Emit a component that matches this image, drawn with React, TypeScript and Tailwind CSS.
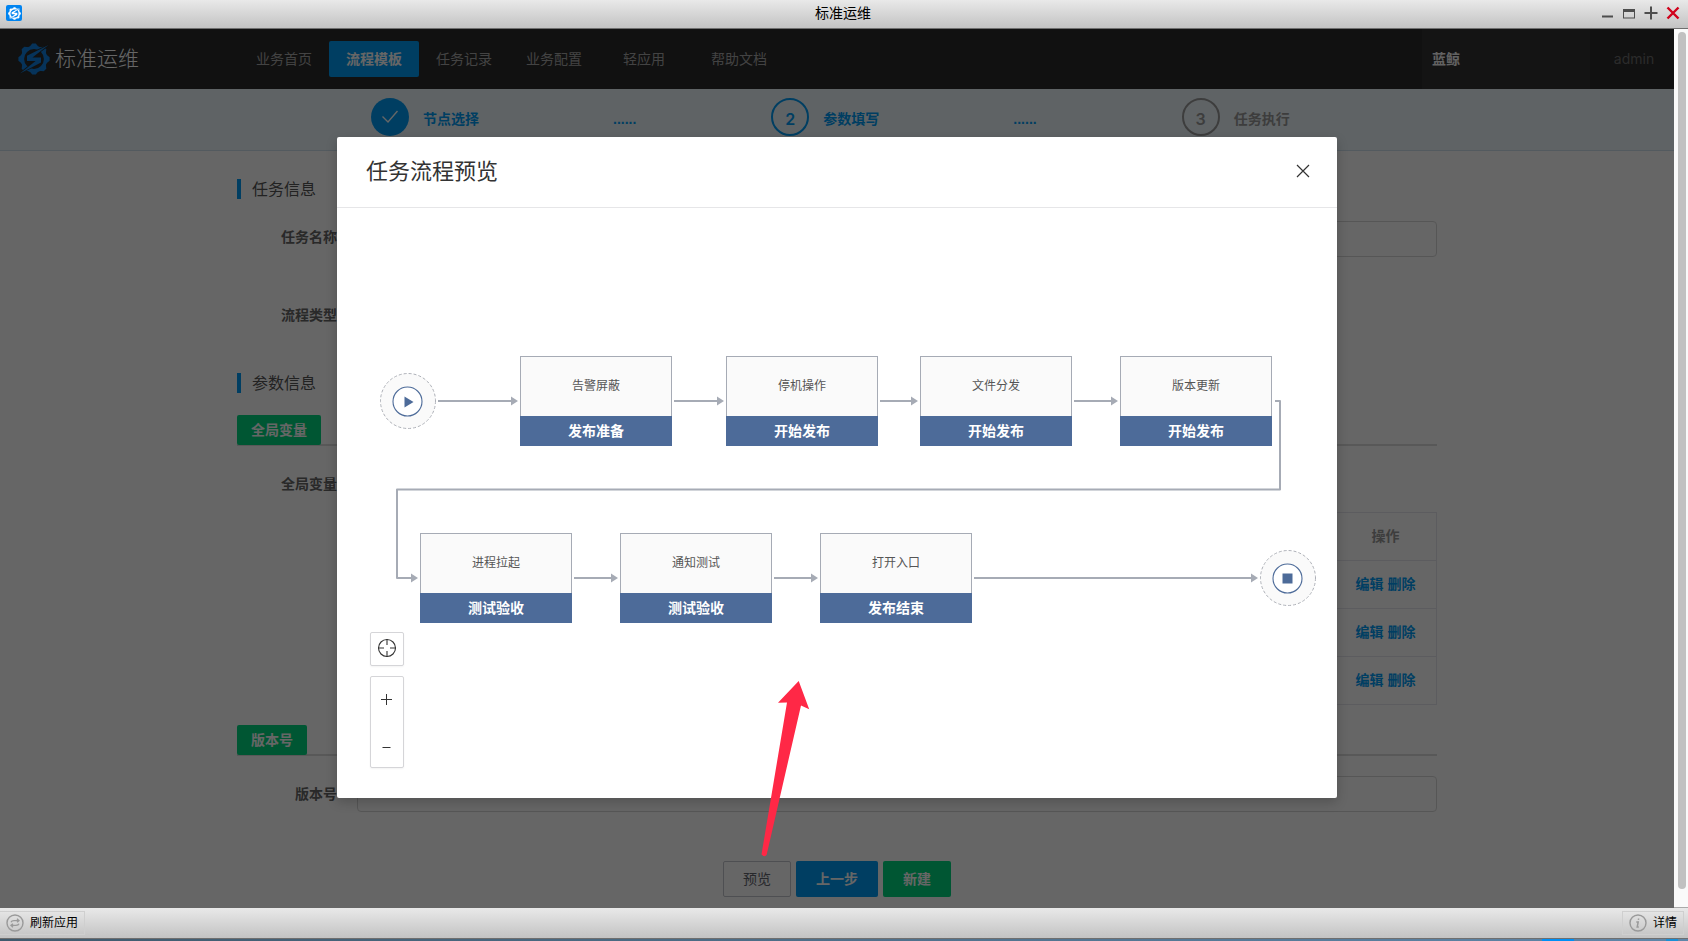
import React from "react";

const NAV = ["业务首页", "流程模板", "任务记录", "业务配置", "轻应用"];

type FlowNode = { x: number; y: number; name: string; stage: string };

const NODES: FlowNode[] = [
  { x: 183, y: 148, name: "告警屏蔽", stage: "发布准备" },
  { x: 389, y: 148, name: "停机操作", stage: "开始发布" },
  { x: 583, y: 148, name: "文件分发", stage: "开始发布" },
  { x: 783, y: 148, name: "版本更新", stage: "开始发布" },
  { x: 83, y: 325, name: "进程拉起", stage: "测试验收" },
  { x: 283, y: 325, name: "通知测试", stage: "测试验收" },
  { x: 483, y: 325, name: "打开入口", stage: "发布结束" },
];

const LINKS = [
  "M101 193H175",
  "M337 193H381",
  "M543 193H575",
  "M737 193H775",
  "M938 193H943V281.5H60V370H75",
  "M237 370H275",
  "M437 370H475",
  "M637 370H915",
];

const HEADS: [number, number][] = [
  [181, 193],
  [387, 193],
  [581, 193],
  [781, 193],
  [81, 370],
  [281, 370],
  [481, 370],
  [921, 370],
];

function Gear({ className, cut }: { className: string; cut: string }) {
  const teeth = [0, 45, 90, 135, 180, 225, 270, 315];
  return (
    <svg viewBox="0 0 32 32" className={className} aria-hidden="true">
      <circle cx="16" cy="16" r="11.6" fill="none" stroke="currentColor" strokeWidth="3.4" />
      {teeth.map((a) => (
        <path key={a} d="M11 4.4L14.2 0.4H17.8L21 4.4Z" fill="currentColor" transform={`rotate(${a} 16 16)`} />
      ))}
      <path
        d="M30.5 2L9 12.8V18H17.6L2 30.400L23 19.600V14.400H14.400Z"
        fill="currentColor"
        stroke={cut}
        strokeWidth="1.6"
        paintOrder="stroke"
      />
    </svg>
  );
}

function TitleBar() {
  return (
    <header className="flex h-[29px] shrink-0 items-center border-b border-[#6f6f6f] bg-linear-to-b from-[#e9e9e9] to-[#c3c3c3] pr-2 pb-0.5 pl-1.5">
      <div className="flex flex-1">
        <span className="flex size-4 items-center justify-center rounded-xs bg-[#0084f0] text-white">
          <Gear className="size-[13px]" cut="#0084f0" />
        </span>
      </div>
      <h1 className="text-sm leading-5 text-black">标准运维</h1>
      <div className="flex flex-1 items-center justify-end gap-2 text-[#4d4d4d]">
        <button aria-label="最小化" className="size-3.5">
          <svg viewBox="0 0 14 14" className="size-3.5"><path d="M2 10.5h11" stroke="currentColor" strokeWidth="2" /></svg>
        </button>
        <button aria-label="还原" className="size-3.5">
          <svg viewBox="0 0 14 14" className="size-3.5"><path d="M1 3h12v9.500H1zM2 6v5.500h10V6z" fill="currentColor" fillRule="evenodd" /></svg>
        </button>
        <button aria-label="最大化" className="size-3.5">
          <svg viewBox="0 0 14 14" className="size-3.5"><path d="M0.500 7h13M7 0.500v13" stroke="currentColor" strokeWidth="2" /></svg>
        </button>
        <button aria-label="关闭" className="size-3.5 text-[#d0021b]">
          <svg viewBox="0 0 14 14" className="size-3.5"><path d="M1.500 1.500l11 11M12.500 1.500l-11 11" stroke="currentColor" strokeWidth="2.4" /></svg>
        </button>
      </div>
    </header>
  );
}

function NavBar() {
  return (
    <div className="flex h-15 items-center bg-[#2b2b2b] text-sm text-[#a8a8a8]">
      <div className="flex w-[239px] items-center gap-[5px] pl-[18px] text-[21px] font-light text-white">
        <Gear className="size-8 text-[#1080e0]" cut="#2b2b2b" />
        标准运维
      </div>
      <nav className="flex flex-1">
        {NAV.map((n, i) => (
          <a
            key={n}
            href="#"
            className={
              i === 1
                ? "flex h-9 w-[90px] items-center justify-center rounded-xs bg-[#009cf5] font-bold text-white"
                : "flex h-9 w-[90px] items-center justify-center"
            }
          >
            {n}
          </a>
        ))}
        <a href="#" className="flex h-9 w-[100px] items-center justify-center">帮助文档</a>
      </nav>
      <div className="flex h-full w-[168px] items-center bg-[#343434] pl-2.5 font-bold text-[#f5f5f5]">蓝鲸</div>
      <div className="w-[84px] pl-1 text-center font-['Inter',sans-serif] text-[#6d6d6d]">admin</div>
    </div>
  );
}

const STEP_NUMBER = "flex size-[38px] items-center justify-center rounded-full border-2 pt-1 font-['Inter',sans-serif] text-base font-semibold";

function Steps() {
  return (
    <div className="h-[62px] border-b border-[#cfe2ee] bg-[#edf7fc] text-sm font-bold text-[#009cf5]">
      <ol className="mx-auto flex max-w-[1200px] items-center pt-[9px] pl-[134px]">
        <li className="flex items-center">
          <span className="flex size-[38px] items-center justify-center rounded-full bg-[#009cf5] text-white">
            <svg viewBox="0 0 16 14" className="h-3.5 w-4"><path d="M0.500 6.500L6 12L15.500 1" fill="none" stroke="currentColor" strokeWidth="1.400" /></svg>
          </span>
          <span className="ml-3.5 pt-1">节点选择</span>
          <span className="ml-[134px] pt-1">......</span>
        </li>
        <li className="ml-[135px] flex items-center">
          <span className={`${STEP_NUMBER} border-[#009cf5]`}>2</span>
          <span className="ml-3.5 pt-1">参数填写</span>
          <span className="ml-[134px] pt-1">......</span>
        </li>
        <li className="ml-[145px] flex items-center text-[#999]">
          <span className={`${STEP_NUMBER} border-[#999]`}>3</span>
          <span className="ml-3.5 pt-1">任务执行</span>
        </li>
      </ol>
    </div>
  );
}

function SectionTitle({ children }: { children: React.ReactNode }) {
  return <h2 className="h-5 border-l-4 border-[#009cf5] pl-[11px] text-base leading-[22px] text-[#555]">{children}</h2>;
}

function GroupTab({ children }: { children: React.ReactNode }) {
  return (
    <div className="flex h-[31px] items-start border-b-2 border-[#dcdcdc]">
      <h3 className="h-[30px] rounded-xs bg-[#00d880] px-3.5 text-sm leading-[30px] font-bold text-white">{children}</h3>
    </div>
  );
}

const INPUT = "h-9 w-full rounded-sm border border-[#d8d8d8] bg-white px-2.5 text-sm";

function TaskForm() {
  return (
    <form className="mx-auto max-w-[1200px] pt-7 pb-[11px] text-sm text-[#666]">
      <SectionTitle>任务信息</SectionTitle>
      <div className="mt-[22px] flex gap-5">
        <label htmlFor="task-name" className="w-[100px] shrink-0 text-right leading-8 font-bold">任务名称</label>
        <input id="task-name" className={INPUT} />
      </div>
      <div className="mt-[42px] flex">
        <span className="w-[100px] shrink-0 text-right leading-8 font-bold">流程类型</span>
      </div>
      <div className="mt-[42px]">
        <SectionTitle>参数信息</SectionTitle>
      </div>
      <div className="mt-[22px]">
        <GroupTab>全局变量</GroupTab>
      </div>
      <div className="mt-5 flex gap-5">
        <span className="w-[100px] shrink-0 text-right leading-9 font-bold">全局变量</span>
        <div className="flex-1 pt-[46px]">
          <table className="w-full border-collapse">
            <thead>
              <tr>
                <td className="border border-[#e6e7ee]" />
                <th scope="col" className="h-12 w-[102px] border border-[#e6e7ee] p-0 pb-0.5 text-center font-bold text-[#999]">操作</th>
              </tr>
            </thead>
            <tbody>
              {[1, 2, 3].map((r) => (
                <tr key={r}>
                  <td className="border border-[#e6e7ee]" />
                  <td className="h-12 border border-[#e6e7ee] p-0 pb-0.5 text-center font-bold text-[#009cf5]">
                    <a href="#">编辑</a> <a href="#">删除</a>
                  </td>
                </tr>
              ))}
            </tbody>
          </table>
        </div>
      </div>
      <div className="mt-5">
        <GroupTab>版本号</GroupTab>
      </div>
      <div className="mt-5 flex gap-5">
        <label htmlFor="version" className="w-[100px] shrink-0 text-right leading-9 font-bold">版本号</label>
        <input id="version" className={INPUT} />
      </div>
      <div className="mt-[49px] flex justify-center gap-[5px] font-bold text-white">
        <button type="button" className="h-9 w-[68px] rounded-xs border border-[#c4c6cc] bg-white font-normal text-[#63656e]">预览</button>
        <button type="button" className="h-9 w-[82px] rounded-xs bg-[#009cf5]">上一步</button>
        <button type="button" className="h-9 w-[68px] rounded-xs bg-[#00d880]">新建</button>
      </div>
    </form>
  );
}

function Terminal({ stop }: { stop?: boolean }) {
  return (
    <svg viewBox="0 0 56 56" className="size-14">
      <circle cx="28" cy="28" r="27.500" fill="#fafafa" stroke="#aeb1b8" strokeDasharray="3 2" />
      <circle cx="27.500" cy="28.500" r="14.500" fill="#fff" stroke="#4d6b99" strokeWidth="1.100" />
      {stop ? <path d="M22.500 23.500h10v10h-10z" fill="#4d6b99" /> : <path d="M24.500 23.500v11l9-5.500z" fill="#4d6b99" />}
    </svg>
  );
}

function FlowCanvas() {
  return (
    <div className="relative h-[590px]">
      <svg className="absolute inset-0 size-full" fill="none" aria-hidden="true">
        {LINKS.map((d) => (
          <path key={d} d={d} stroke="#a6abb5" strokeWidth="2" strokeLinejoin="round" />
        ))}
        {HEADS.map(([x, y]) => (
          <path key={`${x}-${y}`} d={`M${x} ${y}l-7 -4.500v9z`} fill="#a6abb5" />
        ))}
      </svg>
      <div className="absolute top-[165px] left-[43px]"><Terminal /></div>
      <div className="absolute top-[342px] left-[923px]"><Terminal stop /></div>
      {NODES.map((n) => (
        <div key={n.name} className="absolute w-[152px] text-center" style={{ left: n.x, top: n.y }}>
          <div className="h-15 border border-b-0 border-[#a6abb5] bg-[#fafafa] text-xs leading-[58px] text-[#555]">{n.name}</div>
          <div className="h-[30px] bg-[#4d6b99] text-sm leading-[30px] font-bold text-white">{n.stage}</div>
        </div>
      ))}
      <div className="absolute bottom-[30px] left-[33px] flex flex-col gap-2.5 text-[#333]">
        <button aria-label="居中" className="flex size-[34px] items-center justify-center rounded-xs border border-[#d5d5d8] bg-white pr-px pb-0.5 shadow-xs">
          <svg viewBox="0 0 20 20" className="size-5" fill="none" stroke="currentColor" strokeWidth="1.100">
            <circle cx="10" cy="10" r="8.500" />
            <path d="M10 1v6M10 13v6M1 10h6M13 10h6" />
          </svg>
        </button>
        <div className="flex h-[92px] w-[34px] flex-col rounded-xs border border-[#d5d5d8] bg-white shadow-xs">
          <button aria-label="放大" className="flex h-11 items-center justify-center pr-px">
            <svg viewBox="0 0 11 11" className="size-[11px]" stroke="currentColor"><path d="M0 5.500h11M5.500 0v11" /></svg>
          </button>
          <button aria-label="缩小" className="flex flex-1 items-center justify-center pt-1.5 pr-px">
            <svg viewBox="0 0 11 11" className="size-[11px]" stroke="currentColor"><path d="M1.500 5.500h8" /></svg>
          </button>
        </div>
      </div>
    </div>
  );
}

function PreviewDialog() {
  return (
    <div role="dialog" aria-label="任务流程预览" className="w-[1000px] rounded-xs bg-white shadow-[0_4px_12px_rgba(0,0,0,0.2)]">
      <div className="flex h-[71px] items-center justify-between border-b border-[#e6e6e8] pr-[27px] pb-px pl-[29px]">
        <h2 className="text-[22px] text-[#333]">任务流程预览</h2>
        <button aria-label="关闭预览" className="pb-0.5 text-[#333]">
          <svg viewBox="0 0 14 14" className="size-3.5" stroke="currentColor" strokeWidth="1.200"><path d="M1 1l12 12M13 1L1 13" /></svg>
        </button>
      </div>
      <FlowCanvas />
    </div>
  );
}

function StatusBar() {
  return (
    <footer className="shrink-0">
      <div className="flex h-[31px] items-center justify-between border-b border-[#6f6f6f] bg-linear-to-b from-[#e9e9e9] to-[#c3c3c3] pr-1 text-xs text-black">
        <button className="flex h-6 w-[85px] items-center gap-1.5 border border-l-0 border-[#cfcfcf] pl-1.5">
          <svg viewBox="0 0 18 18" className="size-[18px]" fill="none" stroke="#9a9a9a" strokeWidth="1.400">
            <circle cx="9" cy="9" r="8" />
            <path d="M5 8.200C5.500 6.800 7 6.500 9 6.700h3.200M11 4.800l2 1.900-2 1.500M13 9.800c-.5 1.400-2 1.700-4 1.500H5.800M7 13.200l-2-1.900L7 9.800" strokeWidth="1.300" />
          </svg>
          刷新应用
        </button>
        <button className="flex h-6 w-[62px] items-center gap-1.5 border border-[#cfcfcf] pl-1.5">
          <svg viewBox="0 0 18 18" className="size-[18px]" fill="none" stroke="#9a9a9a" strokeWidth="1.400">
            <circle cx="9" cy="9" r="8" />
            <path d="M7.300 8h1.900L8.200 13h1.600M9.600 4.500l-.2 1.400" strokeWidth="1.500" />
          </svg>
          详情
        </button>
      </div>
      <div className="flex h-0.5 justify-end gap-[92px] bg-linear-to-r from-[#3f5a6d] to-[#5f86a8] pr-2.5">
        <span className="w-8 bg-[#008ff5]" />
        <span className="w-3 bg-[#1a8fd5]" />
      </div>
    </footer>
  );
}

export default function App() {
  return (
    <div className="flex min-h-screen flex-col overflow-hidden bg-white font-['Liberation_Sans','Noto_Sans_CJK_SC',sans-serif]">
      <TitleBar />
      <main className="relative flex flex-1">
        <div className="relative flex-1 bg-white">
          <NavBar />
          <Steps />
          <TaskForm />
          <div className="absolute inset-0 flex items-start justify-center bg-black/60 pt-[108px]">
            <PreviewDialog />
          </div>
        </div>
        <div className="w-3.5 border-b border-[#aaa] bg-[#fafafa] px-1 pt-[3px] pb-[18px]">
          <div className="h-full w-2 rounded-full bg-[#c1c1c1]" />
        </div>
        <svg viewBox="0 0 56 178" className="absolute top-[651px] left-1/2 -ml-[84px] h-[178px] w-14" aria-hidden="true">
          <path d="M38.700 1L49.200 29.200L41 25.500L6.600 175Q4.500 177.500 1.500 174.500L27 22.500L18 22.700Z" fill="#ff2846" />
        </svg>
      </main>
      <StatusBar />
    </div>
  );
}
